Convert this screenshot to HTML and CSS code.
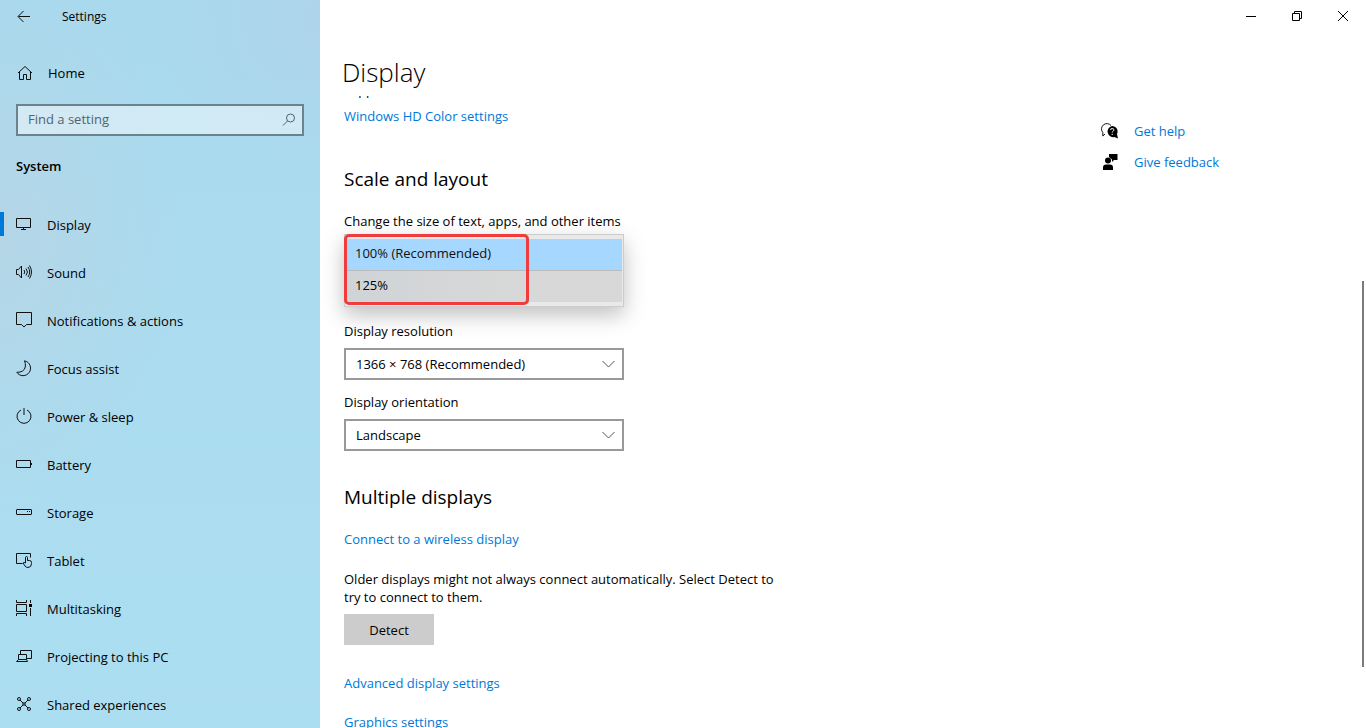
FILE: index.html
```html
<!DOCTYPE html>
<html lang="en">
<head>
  <meta charset="UTF-8">
  <meta name="viewport" content="width=device-width, initial-scale=1.0">
  <title>Settings</title>
  <link rel="stylesheet" href="styles.css">
</head>
<body>
  <div class="window">
    <aside class="sidebar">
      <header class="titlebar">
        <button class="back" aria-label="Back">
          <svg class="icon" viewBox="0 0 16 16"><path d="M14 7.500H2.500M7.500 2L2 7.500 7.500 13"/></svg>
        </button>
        <span class="app-name">Settings</span>
      </header>

      <a class="home" href="#">
        <svg class="icon" viewBox="0 0 16 16"><path d="M1 8L8 1.500 15 8M2.500 7v7.500h4v-5h3v5h4V7"/></svg>
        Home
      </a>

      <div class="search">
        <input type="text" id="search" placeholder="Find a setting" aria-label="Find a setting">
        <svg class="icon search-icon" viewBox="0 0 16 16"><circle cx="9.500" cy="6" r="4"/><path d="M6.500 9L2 13.500"/></svg>
      </div>

      <h2 class="group">System</h2>

      <nav class="nav">
        <a class="nav-item active" href="#">
          <svg class="icon" viewBox="0 0 16 16"><path d="M.5 2.500h14v9H.5zM7.500 11.500v2M5 13.500h5"/></svg>
          Display
        </a>
        <a class="nav-item" href="#">
          <svg class="icon" viewBox="0 0 16 16"><path d="M.5 5.500h2l3-3.500v12l-3-3.500h-2zM8 6q1.500 2 0 4M10 4.500q3 3.500 0 7M12 3q3.500 5 0 10M13.500 1.500q4 6.500 0 13"/></svg>
          Sound
        </a>
        <a class="nav-item" href="#">
          <svg class="icon" viewBox="0 0 16 16"><path d="M.5.5h15v12h-5L8 15l-2.500-2.500h-5z"/></svg>
          Notifications &amp; actions
        </a>
        <a class="nav-item" href="#">
          <svg class="icon" viewBox="0 0 16 16"><path d="M8.500.8A7.500 7.500 0 1 1 .8 12.300Q8 12.500 9.300 7 9.800 3.500 8.500.8z"/></svg>
          Focus assist
        </a>
        <a class="nav-item" href="#">
          <svg class="icon" viewBox="0 0 16 16"><path d="M5 2A7 7 0 1 0 11 2M8 0v7"/></svg>
          Power &amp; sleep
        </a>
        <a class="nav-item" href="#">
          <svg class="icon" viewBox="0 0 16 16"><path d="M.5 4.500h14v7H.5zM15.500 7v2"/></svg>
          Battery
        </a>
        <a class="nav-item" href="#">
          <svg class="icon" viewBox="0 0 16 16"><rect x=".5" y="5.500" width="15" height="5" rx=".5"/><path d="M11 7.500h1M13 7.500h1"/></svg>
          Storage
        </a>
        <a class="nav-item" href="#">
          <svg class="icon" viewBox="0 0 16 16"><path d="M6.500 11.500h-6v-10h14v4M9.500 11V5.500q0-1 1-1t1 1V8.500h2q2 0 2 2v1q0 4-3.500 4-2 0-3-1.500l-2-3q1-1 2.500 0"/></svg>
          Tablet
        </a>
        <a class="nav-item" href="#">
          <svg class="icon" viewBox="0 0 16 16"><path d="M.5 0v2.500h10V0M.5 4.500h10v7H.5zM.5 16v-2.500h10V16M14.500 0v3M14.500 8v8"/><path d="M13 4h3v3h-3z" class="solid"/></svg>
          Multitasking
        </a>
        <a class="nav-item" href="#">
          <svg class="icon" viewBox="0 0 16 16"><path d="M4.500 6V2.500h11v8h-5M2.500 6.500h8v5h-8zM.5 13.500h11l-1-2h-8z"/></svg>
          Projecting to this PC
        </a>
        <a class="nav-item" href="#">
          <svg class="icon" viewBox="0 0 16 16"><circle cx="3" cy="3" r="1.500"/><circle cx="13" cy="3" r="1.500"/><circle cx="3" cy="13" r="1.500"/><circle cx="13" cy="13" r="1.500"/><path d="M4 4l3 3M12 4L9 7M4 12l3-3M12 12L9 9M7 7h2v2H7z"/></svg>
          Shared experiences
        </a>
      </nav>
    </aside>

    <main class="main">
      <div class="window-controls">
        <button aria-label="Minimize"><svg class="control-icon" viewBox="0 0 10 10"><path d="M0 5.500h10"/></svg></button>
        <button aria-label="Restore"><svg class="control-icon" viewBox="0 0 10 10"><path d="M.5 2.500h7v7h-7zM2.500 2.500v-2h7v7h-2"/></svg></button>
        <button aria-label="Close"><svg class="control-icon" viewBox="0 0 10 10"><path d="M0 0l10 10M10 0L0 10"/></svg></button>
      </div>

      <h1 class="page-title">Display</h1>

      <div class="page-scroll">
        <div class="content">
          <p class="hdr-text">support HDR.</p>
          <a class="link hdr-link" href="#">Windows HD Color settings</a>

          <h2 class="section-title">Scale and layout</h2>
          <div class="field">
            <label for="scale">Change the size of text, apps, and other items</label>
            <div class="popup">
              <select id="scale" class="popup-list" size="2">
                <option selected>100% (Recommended)</option>
                <option>125%</option>
              </select>
              <span class="highlight"></span>
            </div>
          </div>
          <div class="field">
            <label for="resolution">Display resolution</label>
            <div class="combo">
              <select id="resolution"><option>1366 × 768 (Recommended)</option></select>
              <svg class="chevron" viewBox="0 0 13 8"><path d="M.5 1l6 6 6-6"/></svg>
            </div>
          </div>
          <div class="field">
            <label for="orientation">Display orientation</label>
            <div class="combo">
              <select id="orientation"><option>Landscape</option></select>
              <svg class="chevron" viewBox="0 0 13 8"><path d="M.5 1l6 6 6-6"/></svg>
            </div>
          </div>

          <h2 class="section-title">Multiple displays</h2>
          <a class="link" href="#">Connect to a wireless display</a>
          <p class="text">Older displays might not always connect automatically. Select Detect to try to connect to them.</p>
          <button class="detect">Detect</button>
          <a class="link" href="#">Advanced display settings</a>
          <a class="link" href="#">Graphics settings</a>
        </div>

        <div class="help">
          <a class="help-link" href="#">
            <svg class="icon" viewBox="0 0 16 16"><path d="M3 11L.8 13V9.500A5 5 0 1 1 9 2.500"/><path class="solid" d="M10 3a5.500 5.500 0 0 1 5 8l1 4.500-3.500-1.500A5.500 5.500 0 1 1 10 3z"/><path class="light" d="M8.500 7q0-1.500 1.700-1.500t1.700 1.400q0 .8-1 1.400-.7.400-.7 1.200M10.200 10.800v1.200"/></svg>
            Get help
          </a>
          <a class="help-link" href="#">
            <svg class="icon" viewBox="0 0 16 16"><circle class="solid" cx="6" cy="6.500" r="3"/><path class="solid" d="M1 16v-2.500Q1 10.500 4 10.500h4q3 0 3 3V16zM7 0h8.500v6H12l-2 2V5.500L7 3z"/></svg>
            Give feedback
          </a>
        </div>
      </div>
      <div class="scrollbar"></div>
    </main>
  </div>
</body>
</html>
```
FILE: styles.css
```css
*, *::before, *::after { box-sizing: border-box; margin: 0; padding: 0; }
body {
  font-family: 'Open Sans', 'Noto Sans', sans-serif;
  font-size: 13px;
  font-weight: 500;
  line-height: 18px;
  color: #000;
  background: #fff;
}
a { color: inherit; text-decoration: none; }
button, input, select { font: inherit; color: inherit; border: none; outline: none; background: none; }

.window { display: flex; height: 100vh; overflow: hidden; }
.icon { width: 16px; height: 16px; flex: none; fill: none; stroke: #111; stroke-width: 1; overflow: visible; }
.icon .solid { fill: #000; stroke: none; }
.icon .light { stroke: #fff; }

/* sidebar */
.sidebar {
  width: 320px; flex: none; overflow: hidden;
  background:
    radial-gradient(circle at 100% 20px, rgba(176,211,236,0.8), rgba(176,211,236,0) 160px),
    radial-gradient(ellipse at 0 240px, rgba(183,213,229,0.8), rgba(183,213,229,0) 180px),
    linear-gradient(#a9d9ed, #acdef1);
}
.titlebar { display: flex; align-items: center; height: 33px; padding: 0 16px; gap: 30px; font-size: 12px; font-weight: 400; }
.back { display: flex; }
.home { display: flex; align-items: center; gap: 15px; height: 48px; margin-top: 16px; padding: 0 17px; }
.search { position: relative; margin: 7px 16px 0; }
.search input {
  display: block; width: 100%; height: 32px; padding: 0 36px 2px 10px;
  border: 2px solid #6b838d; background: rgba(255,255,255,0.45);
}
.search input::placeholder { color: #53636b; opacity: 1; }
.search-icon { position: absolute; right: 7px; top: 8px; stroke: #53636b; }
.group { margin: 21px 16px 26px; font-size: 13px; line-height: 18px; font-weight: 600; }
.nav-item { display: flex; align-items: center; gap: 15px; height: 48px; padding: 0 16px; position: relative; }
.nav-item .icon { margin-bottom: 2px; }
.nav-item.active::before { content: ''; position: absolute; left: 0; top: 11px; width: 4px; height: 24px; background: #0078d7; }

/* main page */
.main { position: relative; flex: 1; min-width: 0; display: flex; flex-direction: column; }
.window-controls { display: flex; justify-content: flex-end; height: 32px; }
.window-controls button { display: flex; align-items: center; justify-content: center; width: 46px; }
.control-icon { width: 10px; height: 10px; fill: none; stroke: #000; }
.page-title { margin: 26px 22px 10px; font-size: 26px; line-height: 28px; font-weight: 350; }
.page-scroll { flex: 1; min-height: 0; display: flex; justify-content: space-between; overflow: hidden; }
.content { width: 494px; padding: 0 24px; }
.hdr-text { margin-top: -15px; font-weight: 400; }
.link { display: block; width: max-content; color: #0078d7; }
.hdr-link { margin: 8px 0 40px; }
.section-title { margin: 32px 0 19px; font-size: 19px; line-height: 28px; font-weight: 400; }
.field { margin-bottom: 13px; }
.field label { display: block; margin-bottom: 8px; }

/* opened list, drawn close under its label */
.popup { position: relative; width: 280px; margin: -4px 0 15px; border: 1px solid #ccc; background: #e9e9e9; box-shadow: 0 8px 20px rgba(0,0,0,0.25); }
.popup-list { display: block; width: 100%; height: 71px; padding: 3px 1px 4px 0; overflow: hidden; }
.popup-list option { height: 32px; padding: 5px 10px 8px; line-height: 18px; background: linear-gradient(90deg, #d0d4d7, #d8d8d8 70%); border-top: 1px solid #bbb; }
.popup-list option:checked { background: linear-gradient(#a6d8ff, #a6d8ff); border-top-color: #e9e9e9; }
.highlight { position: absolute; left: -1px; top: -1px; width: 185px; height: 71px; border: 3px solid #f03c3c; border-radius: 5px; pointer-events: none; }

.combo { position: relative; width: 280px; }
.combo select { display: block; width: 100%; height: 32px; padding: 0 32px 0 10px; border: 2px solid #999; appearance: none; background: #fff; }
.chevron { position: absolute; right: 9px; top: 12px; width: 13px; height: 8px; fill: none; stroke: #555; pointer-events: none; }
.text { margin: 22px 0 8px; }
.detect { display: block; width: 90px; height: 31px; background: #ccc; }
.detect + .link { margin: 29px 0 21px; }

.help { width: 264px; padding-top: 26px; }
.help-link { display: flex; align-items: center; gap: 16px; margin-bottom: 13px; color: #0078d7; }
.scrollbar { position: absolute; right: 2px; top: 281px; bottom: 61px; width: 2px; background: #7a7a7a; }
```
